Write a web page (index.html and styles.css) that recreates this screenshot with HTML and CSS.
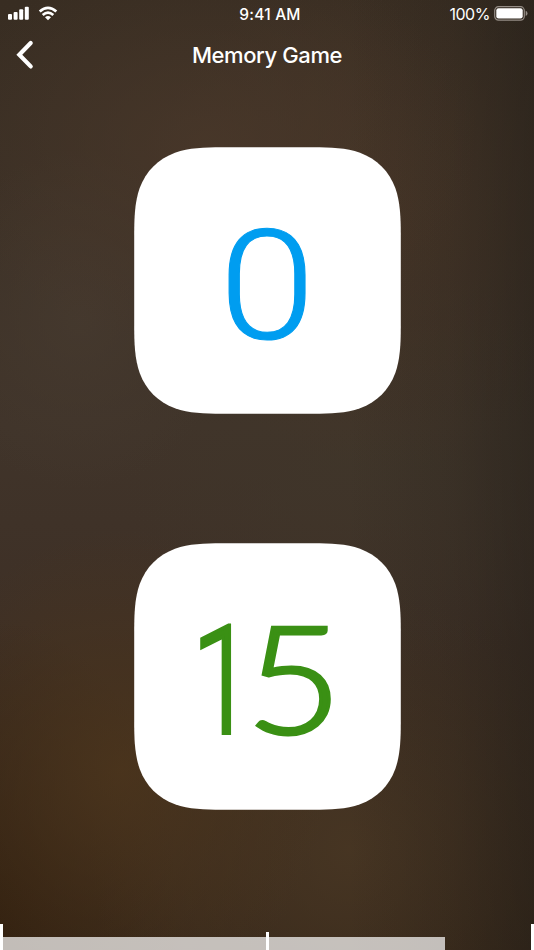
FILE: index.html
```html
<!DOCTYPE html>
<html lang="en">
<head>
<meta charset="utf-8">
<title>Memory Game</title>
<link rel="stylesheet" href="styles.css">
</head>
<body>
<div class="screen">
  <header class="status">
    <svg class="signals" width="52" height="16" viewBox="0 0 52 16" fill="#fff">
      <rect x="0" y="8" width="4" height="5.8" rx="1"/>
      <rect x="5.6" y="6" width="4" height="7.8" rx="1"/>
      <rect x="11.2" y="3.2" width="4" height="10.6" rx="1"/>
      <rect x="16.8" y="0.7" width="4" height="13.1" rx="1"/>
      <g fill="none" stroke="#fff" stroke-width="2.7">
        <path d="M31.7 5.6Q40 -2 48.3 5.6"/>
        <path d="M34.7 9Q40 4.2 45.3 9"/>
      </g>
      <path d="M37 11.2Q40 8.8 43 11.2L40 14.2Z"/>
    </svg>
    <span class="time">9:41 AM</span>
    <div class="power">
      <span class="percent">100%</span>
      <svg width="34" height="16" viewBox="0 0 34 16">
        <rect x=".7" y=".7" width="29.6" height="13.4" rx="3.8" fill="none" stroke="#958d86" stroke-width="1.2"/>
        <rect x="2.3" y="2.3" width="26.4" height="10.2" rx="2.2" fill="#fff"/>
        <path d="M31.7 4.8Q33.5 5.5 33.5 7.4T31.7 10Z" fill="#958d86"/>
      </svg>
    </div>
  </header>
  <nav class="nav">
    <svg class="back" width="20" height="30" viewBox="0 0 20 30"><path d="M15.7 3L4.3 14.7L15.7 26.4" fill="none" stroke="#fff" stroke-width="4.2" stroke-linecap="round" stroke-linejoin="miter"/></svg>
    <h1 class="title">Memory Game</h1>
  </nav>
  <main class="tiles">
    <svg class="tile blue" width="267" height="267" viewBox="0 0 267 267">
      <path class="face" d="M88 .2H179C197 .2 212 .8 226 5.7C243 12 255 24 261.3 41C266.2 55 266.8 70 266.8 88V179C266.8 197 266.2 212 261.3 226C255 243 243 255 226 261.3C212 266.2 197 266.8 179 266.8H88C70 266.8 55 266.2 41 261.3C24 255 12 243 5.7 226C.8 212 .2 197 .2 179V88C.2 70 .8 55 5.7 41C12 24 24 12 41 5.7C55 .8 70 .2 88 .2Z"/>
      <text class="digit zero" transform="translate(133 191.5) scale(1.14 1)" text-anchor="middle">0</text>
    </svg>
    <svg class="tile green" width="267" height="267" viewBox="0 0 267 267">
      <path class="face" d="M88 .2H179C197 .2 212 .8 226 5.7C243 12 255 24 261.3 41C266.2 55 266.8 70 266.8 88V179C266.8 197 266.2 212 261.3 226C255 243 243 255 226 261.3C212 266.2 197 266.8 179 266.8H88C70 266.8 55 266.2 41 261.3C24 255 12 243 5.7 226C.8 212 .2 197 .2 179V88C.2 70 .8 55 5.7 41C12 24 24 12 41 5.7C55 .8 70 .2 88 .2Z"/>
      <text class="digit one" transform="translate(58 190.2) scale(.73 .985)">1</text>
      <text class="digit five" transform="translate(111.5 190.8) scale(1.1 .985)">5</text>
    </svg>
  </main>
  <footer class="timer">
    <i class="edge"></i>
    <div class="track"><div class="fill"></div><i class="tick"></i></div>
    <i class="edge"></i>
  </footer>
</div>
</body>
</html>
```
FILE: styles.css
```css
* { box-sizing: border-box; }
body { margin: 0; background: #3e3228; }
.screen {
  width: 534px;
  height: 950px;
  overflow: hidden;
  display: flex;
  flex-direction: column;
  color: #fff;
  font-family: Inter, "Liberation Sans", sans-serif;
  background:
    linear-gradient(90deg, transparent 65%, rgba(30, 27, 22, .18) 85%, rgba(30, 27, 22, .45) 100%),
    radial-gradient(ellipse 210px 240px at 120px 770px, rgba(76, 53, 28, .85), transparent),
    radial-gradient(ellipse 260px 260px at 350px 850px, rgba(74, 56, 36, .8), transparent),
    radial-gradient(ellipse 180px 300px at 0 920px, rgba(50, 32, 15, .9), transparent),
    radial-gradient(ellipse 270px 200px at 210px 150px, rgba(74, 56, 42, .8), transparent),
    radial-gradient(ellipse 240px 260px at 390px 210px, rgba(72, 54, 39, .8), transparent),
    radial-gradient(ellipse 150px 170px at 80px 320px, rgba(70, 58, 47, .8), transparent),
    radial-gradient(ellipse 260px 200px at 380px 470px, rgba(64, 54, 42, .8), transparent),
    linear-gradient(#382d22 0, #40342a 45%, #3e3026 65%, #352619 100%);
}
.status {
  height: 28px;
  flex: none;
  display: grid;
  grid-template-columns: 1fr auto 1fr;
  align-items: center;
  padding: 0 6px 0 8px;
  font-size: 16px;
}
.time { font-weight: 500; font-size: 15.5px; letter-spacing: .2px; padding-left: 4px; }
.power { display: flex; align-items: center; justify-content: flex-end; gap: 4px; }
.percent { letter-spacing: -.45px; }
.signals { margin-top: -1px; }
.nav {
  height: 54px;
  flex: none;
  display: grid;
  grid-template-columns: 60px 1fr 60px;
  align-items: center;
  padding-bottom: 1px;
}
.back { margin-left: 15px; }
.title { margin: 0; font-size: 22px; font-weight: 500; text-align: center; letter-spacing: -.4px; }
.tiles {
  flex: 1;
  display: flex;
  flex-direction: column;
  align-items: center;
  gap: 129px;
  padding-top: 65px;
}
.tile { flex: none; display: block; }
.face { fill: #fff; }
.digit { font-size: 152px; font-weight: 300; }
.zero { font-family: Roboto, sans-serif; stroke: #009df0; stroke-width: 1; }
.one { font-family: Roboto, sans-serif; stroke: #3a9014; stroke-width: 4; }
.five { font-family: Lato, sans-serif; stroke: #3a9014; stroke-width: 3.2; }
.blue .digit { fill: #009df0; }
.green .digit { fill: #3a9014; }
.timer { height: 26px; flex: none; display: flex; }
.edge { width: 3px; background: #fff; }
.track { flex: 1; position: relative; display: flex; align-items: flex-end; }
.fill { width: 442px; height: 13px; background: rgba(255, 255, 255, .7); }
.tick { position: absolute; left: 262.5px; bottom: 0; width: 3px; height: 18px; background: #fff; }
```
